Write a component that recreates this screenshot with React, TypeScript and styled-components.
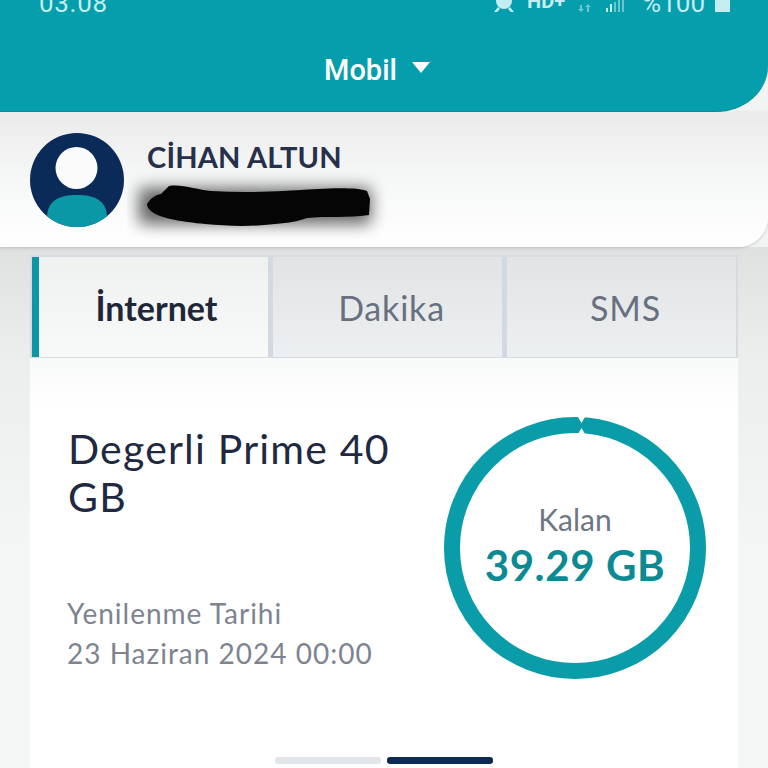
import React from "react";
import styled, { createGlobalStyle } from "styled-components";

const Global = createGlobalStyle`
  html, body {
    margin: 0;
    padding: 0;
    background: #f2f3f3;
  }
  * {
    box-sizing: border-box;
  }
`;

const Page = styled.div`
  width: 768px;
  height: 768px;
  overflow: hidden;
  font-family: "Lato", "Liberation Sans", sans-serif;
  background: linear-gradient(#dfe1e1 0, #eceeee 110px, #f4f5f5 300px);
  background-position: 0 247px;
  background-repeat: no-repeat;
`;

const Header = styled.header`
  position: relative;
  z-index: 2;
  height: 112px;
  background: #059eac;
  border-bottom-right-radius: 52px 46px;
  border-bottom: 1px solid #058f9c;
  color: #fff;
`;

const StatusBar = styled.div`
  height: 12px;
  padding: 0 38px 0 39px;
  display: flex;
  align-items: flex-start;
  justify-content: space-between;
  font-family: "Roboto", sans-serif;
  font-size: 26px;
  line-height: 6px;
  color: #c3edf0;
`;

const StatusTime = styled.span`
  letter-spacing: 0.7px;
`;

const StatusRight = styled.div`
  display: flex;
  align-items: flex-start;
  height: 12px;
`;

const StatusHd = styled.span`
  font-size: 20px;
  font-weight: 700;
  line-height: 2px;
  margin: 0 12px 0 12px;
`;

const StatusPct = styled.span`
  margin: 0 10px 0 15px;
`;

const Selector = styled.div`
  margin-top: 41px;
  padding-right: 14px;
  display: flex;
  justify-content: center;
  align-items: center;
  gap: 15px;
  font-family: "Roboto", sans-serif;
  font-size: 29px;
  font-weight: 500;
  line-height: 34px;
`;

const Caret = styled.span`
  width: 0;
  height: 0;
  margin-top: -6px;
  border-left: 9px solid transparent;
  border-right: 9px solid transparent;
  border-top: 11px solid #fff;
`;

const Profile = styled.section`
  height: 135px;
  padding: 21px 30px 0;
  display: flex;
  gap: 23px;
  background: linear-gradient(#ebebeb, #f7f8f8 55%, #ffffff);
  border-bottom-right-radius: 30px;
  box-shadow: 0 1px 3px rgba(120, 130, 130, 0.35);
  position: relative;
  z-index: 1;
`;

const Avatar = styled.svg`
  width: 94px;
  height: 94px;
  flex: none;
`;

const ProfileText = styled.div`
  display: flex;
  flex-direction: column;
`;

const Name = styled.div`
  margin-top: 7px;
  font-size: 29px;
  font-weight: 700;
  line-height: 34px;
  letter-spacing: 0.2px;
  color: #26304a;
`;

const Redaction = styled.svg`
  width: 270px;
  height: 70px;
  margin: -4px 0 0 -20px;
`;

const Main = styled.main`
  margin: 8px 30px 0;
`;

const Tabs = styled.div`
  height: 104px;
  display: grid;
  grid-template-columns: 241px 234px 1fr;
  border: 2px solid #d6dbe2;
`;

const Tab = styled.div<{ $active?: boolean }>`
  display: flex;
  align-items: center;
  justify-content: center;
  font-size: 34px;
  font-weight: ${(p) => (p.$active ? 700 : 400)};
  letter-spacing: ${(p) => (p.$active ? "0" : "0.8px")};
  color: ${(p) => (p.$active ? "#1f2638" : "#687080")};
  background: ${(p) =>
    p.$active
      ? "linear-gradient(#eff0f0, #f8f9f9)"
      : "linear-gradient(#e1e3e4, #edf0f2)"};
  border-left: ${(p) => (p.$active ? "7px solid #0b98a4" : "0")};
  border-right: 5px solid #d3d9e3;
  padding-left: ${(p) => (p.$active ? "6px" : "8px")};

  &:last-child {
    border-right: 0;
  }
`;

const Panel = styled.div`
  height: 410px;
  margin-top: -1px;
  background: linear-gradient(#f8f9f9, #ffffff 50px);
  padding: 59px 32px 0 38px;
  display: flex;
  flex-direction: column;
`;

const PanelBody = styled.div`
  display: flex;
  justify-content: space-between;
`;

const PlanInfo = styled.div`
  width: 345px;
  display: flex;
  flex-direction: column;
`;

const PlanTitle = styled.h2`
  margin: 8px 0 0;
  font-size: 41px;
  font-weight: 400;
  line-height: 48px;
  letter-spacing: 1.2px;
  color: #20293f;
`;

const Renewal = styled.div`
  margin-top: 72px;
  margin-left: -1px;
  font-size: 28px;
  line-height: 40px;
  letter-spacing: 1px;
  color: #7d8490;
`;

const Gauge = styled.div`
  position: relative;
  width: 262px;
  height: 262px;
  flex: none;
`;

const GaugeRing = styled.svg`
  width: 262px;
  height: 262px;
`;

const GaugeLabel = styled.div`
  position: absolute;
  inset: 0;
  display: flex;
  flex-direction: column;
  align-items: center;
  justify-content: center;
  padding: 0 0 7px 0;
`;

const GaugeCaption = styled.span`
  font-size: 30px;
  line-height: 40px;
  color: #6f7684;
`;

const GaugeValue = styled.span`
  font-size: 42px;
  font-weight: 700;
  line-height: 52px;
  letter-spacing: 0.6px;
  color: #0b8a94;
`;

const Dots = styled.div`
  margin-top: 78px;
  display: flex;
  justify-content: center;
  gap: 6px;
  padding-right: 6px;
`;

const Dot = styled.span<{ $active?: boolean }>`
  width: 106px;
  height: 7px;
  border-radius: 3px;
  background: ${(p) => (p.$active ? "#0b2a56" : "#e2e4ec")};
`;

const App = () => (
  <Page>
    <Global />
    <Header>
      <StatusBar>
        <StatusTime>03.08</StatusTime>
        <StatusRight>
          <svg width="22" height="12" viewBox="0 0 22 12" fill="#c3edf0">
            <circle cx="11" cy="1" r="8" />
            <path d="M1 12l4-5 2 2-3 3zM21 12l-4-5-2 2 3 3z" />
          </svg>
          <StatusHd>HD+</StatusHd>
          <svg width="50" height="12" viewBox="0 0 50 12" fill="#6cc6cf">
            <path d="M3 5h2v4h2l-3 3-3-3h2zM10 12V7H8l3-3 3 3h-2v5z" />
            <path fill="#c3edf0" d="M29 8h2v4h-2zM33 4h2v8h-2z" />
            <path d="M37 2h2v10h-2zM41 0h2v12h-2zM45 0h2v12h-2z" />
          </svg>
          <StatusPct>%100</StatusPct>
          <svg width="15" height="12" viewBox="0 0 15 12" fill="#c3edf0">
            <path d="M0 0h15v12H0z" />
          </svg>
        </StatusRight>
      </StatusBar>
      <Selector>
        Mobil
        <Caret />
      </Selector>
    </Header>
    <Profile>
      <Avatar viewBox="0 0 94 94">
        <defs>
          <clipPath id="avatar-clip">
            <circle cx="47" cy="47" r="47" />
          </clipPath>
        </defs>
        <circle cx="47" cy="47" r="47" fill="#0a2a57" />
        <circle cx="46.5" cy="35" r="21" fill="#fbfbfb" />
        <path
          clipPath="url(#avatar-clip)"
          d="M17 85c0-18 13-23 30-23s30 5 30 23v9H17z"
          fill="#0b98a6"
        />
      </Avatar>
      <ProfileText>
        <Name>CİHAN ALTUN</Name>
        <Redaction viewBox="0 0 270 70">
          <defs>
            <filter id="redaction-blur" x="-15%" y="-60%" width="130%" height="220%">
              <feGaussianBlur stdDeviation="8" />
            </filter>
          </defs>
          <path
            d="M12 18h232v36H12z"
            fill="#000"
            opacity="0.6"
            filter="url(#redaction-blur)"
          />
          <path
            d="M20 34c4-6 8-9 14-10l8-8c14-2 28 4 42 5 30 2 60 1 90-1 14-1 54-4 66 1l3 8-1 16c-22 3-44 1-62 3-8 3-18 5-32 6-26 3-48 2-70 0-20-2-58-6-58-20z"
            fill="#050505"
          />
        </Redaction>
      </ProfileText>
    </Profile>
    <Main>
      <Tabs>
        <Tab $active>İnternet</Tab>
        <Tab>Dakika</Tab>
        <Tab>SMS</Tab>
      </Tabs>
      <Panel>
        <PanelBody>
          <PlanInfo>
            <PlanTitle>Degerli Prime 40 GB</PlanTitle>
            <Renewal>
              Yenilenme Tarihi
              <br />
              23 Haziran 2024 00:00
            </Renewal>
          </PlanInfo>
          <Gauge>
            <GaugeRing viewBox="0 0 262 262">
              <circle
                cx="131"
                cy="131"
                r="123"
                fill="none"
                stroke="#0a9da9"
                strokeWidth="16"
              />
              <path d="M134 0h7l-3.500 6zM134 17h7l-3.500-6z" fill="#ffffff" />
            </GaugeRing>
            <GaugeLabel>
              <GaugeCaption>Kalan</GaugeCaption>
              <GaugeValue>39.29 GB</GaugeValue>
            </GaugeLabel>
          </Gauge>
        </PanelBody>
        <Dots>
          <Dot />
          <Dot $active />
        </Dots>
      </Panel>
    </Main>
  </Page>
);

export default App;
